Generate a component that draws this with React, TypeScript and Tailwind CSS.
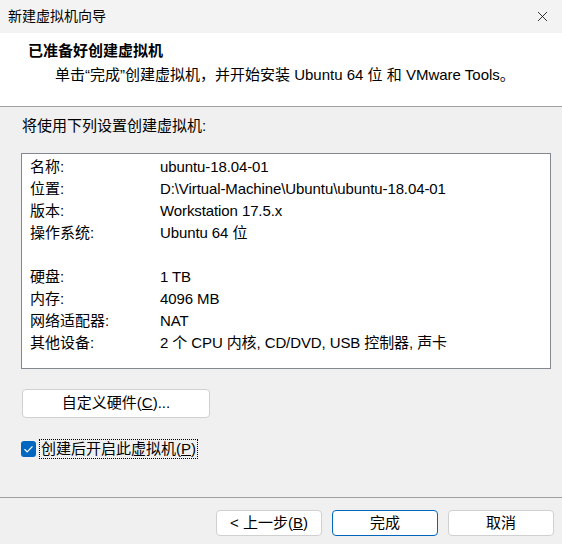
import { Check, X } from "lucide-react";

const rows: [string, string][] = [
  ["名称:", "ubuntu-18.04-01"],
  ["位置:", "D:\\Virtual-Machine\\Ubuntu\\ubuntu-18.04-01"],
  ["版本:", "Workstation 17.5.x"],
  ["操作系统:", "Ubuntu 64 位"],
  ["", ""],
  ["硬盘:", "1 TB"],
  ["内存:", "4096 MB"],
  ["网络适配器:", "NAT"],
  ["其他设备:", "2 个 CPU 内核, CD/DVD, USB 控制器, 声卡"],
];

const App = () => {
  return (
    <div className="w-[562px] h-[544px] overflow-hidden bg-[#f0f0f0] text-black font-['Liberation_Sans','Noto_Sans_CJK_SC',sans-serif] text-[15px]">
      {/* Title bar */}
      <div className="h-[33px] bg-[#f3f3f3] flex items-center justify-between pl-[8px] pr-[11px]">
        <span className="text-[14px]">新建虚拟机向导</span>
        <X size={17} strokeWidth={1.1} className="text-black" />
      </div>

      {/* Header */}
      <div className="h-[74px] bg-white border-b border-[#a0a0a0] pl-[28px] pt-[7px]">
        <div className="font-bold text-[15px] leading-[22px]">已准备好创建虚拟机</div>
        <div className="pl-[27px] mt-[2px] leading-[22px]">
          单击“完成”创建虚拟机，并开始安装 Ubuntu 64 位 和 VMware Tools。
        </div>
      </div>

      {/* Body */}
      <div className="h-[390px] px-[21px] pt-[9px]">
        <div className="leading-[20px] pl-[1px]">将使用下列设置创建虚拟机:</div>

        <div className="mt-[17px] h-[216px] w-[530px] bg-white border border-[#828790] pt-[2px] pl-[8px]">
          {rows.map(([label, value], i) => (
            <div key={i} className="flex h-[22px] items-center">
              <span className="w-[130px]">{label}</span>
              <span className="tracking-[-0.1px]">{value}</span>
            </div>
          ))}
        </div>

        <button className="mt-[20px] ml-[1px] h-[29px] w-[188px] bg-white border border-[#d0d0d0] rounded-[4px] flex items-center justify-center">
          自定义硬件(<span className="underline">C</span>)...
        </button>

        <div className="mt-[21px] flex items-center h-[20px]">
          <span className="w-[15px] h-[16px] rounded-[3px] bg-[#0067c0] flex items-center justify-center">
            <Check size={11} strokeWidth={2.5} className="text-white" />
          </span>
          <span className="ml-[3px] h-[20px] px-[1px] border border-dotted border-black flex items-center">
            创建后开启此虚拟机(<span className="underline">P</span>)
          </span>
        </div>
      </div>

      {/* Footer */}
      <div className="border-t border-[#a0a0a0] pt-[12px] flex justify-end gap-[10px] pr-[8px]">
        <button className="h-[26px] w-[106px] bg-white border border-[#d0d0d0] rounded-[4px] flex items-center justify-center">
          &lt; 上一步(<span className="underline">B</span>)
        </button>
        <button className="h-[26px] w-[106px] bg-white border border-[#0067c0] rounded-[4px] flex items-center justify-center">
          完成
        </button>
        <button className="h-[26px] w-[106px] bg-white border border-[#d0d0d0] rounded-[4px] flex items-center justify-center">
          取消
        </button>
      </div>
    </div>
  );
};

export default App;
